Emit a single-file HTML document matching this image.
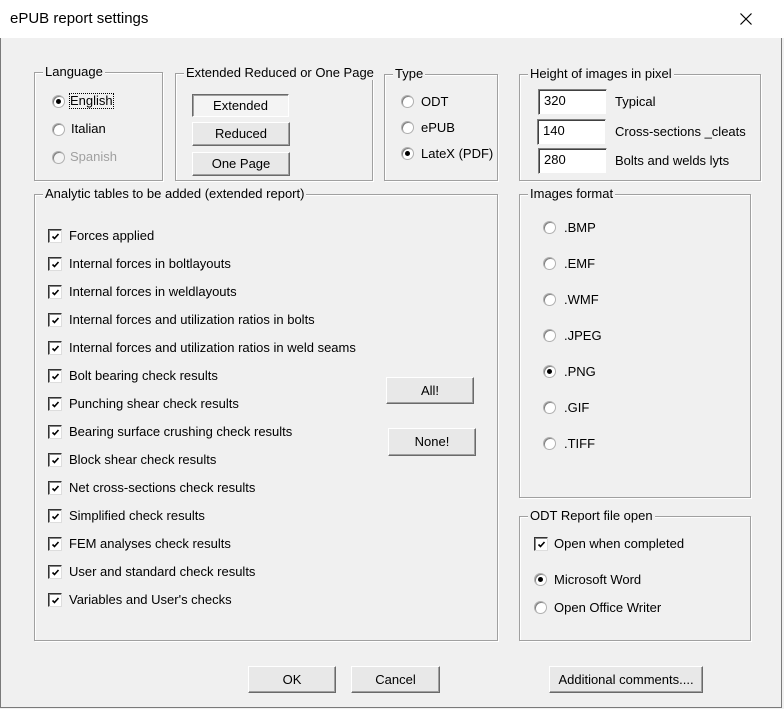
<!DOCTYPE html>
<html><head><meta charset="utf-8"><style>
*{margin:0;padding:0;box-sizing:border-box}
body{width:784px;height:709px;background:#f0f0f0;font-family:"Liberation Sans",sans-serif;font-size:13px;color:#000;position:relative;overflow:hidden}
.win{position:absolute;left:0;top:0;width:782px;height:708px;border:1px solid #7a7a7a;border-top:none}
.title{position:absolute;left:0;top:0;width:784px;height:38px;background:#fff}
.title span{position:absolute;left:10px;top:10px;font-size:15px}
.x{position:absolute;left:740px;top:13px}
.g{position:absolute;border:1px solid #a0a0a0;box-shadow:inset 1px 1px 0 #fff,1px 1px 0 #fff}
.g>.l{position:absolute;top:-8px;left:8px;background:#f0f0f0;padding:0 2px;line-height:14px;white-space:nowrap}
.t{position:absolute;line-height:14px;white-space:nowrap}
.r{position:absolute;width:13px;height:13px;border-radius:50%;background:#fff;border:1px solid #b0b0b0;box-shadow:inset 1px 1px 0 #808080}
.r.on::after{content:"";position:absolute;left:3px;top:3px;width:5px;height:5px;border-radius:50%;background:#000}
.c{position:absolute;width:14px;height:14px;background:#fff;border:1px solid #333;border-right-color:#ddd;border-bottom-color:#ddd;box-shadow:inset 1px 1px 0 #888}
.c svg{position:absolute;left:1px;top:1px}
.b{position:absolute;background:#e8e8e8;border:1px solid;border-color:#fff #6a6a6a #6a6a6a #fff;box-shadow:inset -1px -1px 0 #a0a0a0;text-align:center;line-height:22px}
.e{position:absolute;width:69px;height:26px;background:#fff;border:1px solid;border-color:#808080 #f0f0f0 #f0f0f0 #808080;box-shadow:inset 1px 1px 0 #404040;padding:3px 0 0 5px}
</style></head><body>
<div class="win"></div>
<div class="title"><span>ePUB report settings</span><svg class="x" width="12" height="12"><path d="M0.5 0.5L11.5 11.5M11.5 0.5L0.5 11.5" stroke="#000" stroke-width="1.2"/></svg></div>

<div class="g" style="left:34px;top:72px;width:129px;height:109px"><div class="l">Language</div></div>
<div class="r on" style="left:52px;top:95px"></div><div class="t" style="left:70px;top:94px;outline:1px dotted #000">English</div>
<div class="r" style="left:52px;top:123px"></div><div class="t" style="left:71px;top:122px">Italian</div>
<div class="r" style="left:52px;top:151px;background:#f4f4f4"></div><div class="t" style="left:70px;top:150px;color:#a0a0a0">Spanish</div>

<div class="g" style="left:175px;top:73px;width:198px;height:108px"><div class="l">Extended Reduced or One Page</div></div>
<div class="b" style="left:192px;top:94px;width:97px;height:23px;border-color:#6a6a6a #fff #fff #6a6a6a;box-shadow:inset 1px 1px 0 #a0a0a0;background:#f4f4f4">Extended</div>
<div class="b" style="left:192px;top:122px;width:98px;height:24px">Reduced</div>
<div class="b" style="left:192px;top:152px;width:98px;height:24px">One Page</div>

<div class="g" style="left:384px;top:74px;width:114px;height:107px"><div class="l">Type</div></div>
<div class="r" style="left:401px;top:95px"></div><div class="t" style="left:421px;top:95px">ODT</div>
<div class="r" style="left:401px;top:121px"></div><div class="t" style="left:421px;top:121px">ePUB</div>
<div class="r on" style="left:401px;top:147px"></div><div class="t" style="left:421px;top:147px">LateX (PDF)</div>

<div class="g" style="left:519px;top:74px;width:242px;height:107px"><div class="l">Height of images in pixel</div></div>
<div class="e" style="left:538px;top:89px">320</div><div class="t" style="left:615px;top:95px">Typical</div>
<div class="e" style="left:537px;top:119px">140</div><div class="t" style="left:615px;top:125px">Cross-sections _cleats</div>
<div class="e" style="left:538px;top:148px">280</div><div class="t" style="left:615px;top:154px">Bolts and welds lyts</div>

<div class="g" style="left:34px;top:194px;width:464px;height:447px"><div class="l">Analytic tables to be added (extended report)</div></div>
<div id="cb"></div>
<div class="b" style="left:386px;top:377px;width:88px;height:27px;line-height:25px">All!</div>
<div class="b" style="left:388px;top:428px;width:88px;height:28px;line-height:26px">None!</div>

<div class="g" style="left:519px;top:194px;width:232px;height:304px"><div class="l">Images format</div></div>
<div id="rf"></div>

<div class="g" style="left:519px;top:516px;width:232px;height:125px"><div class="l">ODT Report file open</div></div>
<div class="c" style="left:534px;top:537px"><svg width="11" height="11"><path d="M2.5 5.5 L4.5 7.5 L8.5 3" stroke="#000" stroke-width="1.6" fill="none"/></svg></div><div class="t" style="left:554px;top:537px">Open when completed</div>
<div class="r on" style="left:534px;top:573px"></div><div class="t" style="left:554px;top:573px">Microsoft Word</div>
<div class="r" style="left:534px;top:601px"></div><div class="t" style="left:554px;top:601px">Open Office Writer</div>

<div class="b" style="left:248px;top:666px;width:88px;height:27px;line-height:25px">OK</div>
<div class="b" style="left:351px;top:666px;width:89px;height:27px;line-height:25px">Cancel</div>
<div class="b" style="left:549px;top:666px;width:154px;height:27px;line-height:25px">Additional comments....</div>

<script>
var L=["Forces applied","Internal forces in boltlayouts","Internal forces in weldlayouts","Internal forces and utilization ratios in bolts","Internal forces and utilization ratios in weld seams","Bolt bearing check results","Punching shear check results","Bearing surface crushing check results","Block shear check results","Net cross-sections check results","Simplified check results","FEM analyses check results","User and standard check results","Variables and User's checks"],h="";
L.forEach(function(s,i){var y=229+28*i;h+='<div class="c" style="left:48px;top:'+y+'px"><svg width="11" height="11"><path d="M2.5 5.5 L4.5 7.5 L8.5 3" stroke="#000" stroke-width="1.6" fill="none"/></svg></div><div class="t" style="left:69px;top:'+y+'px">'+s+'</div>';});
document.getElementById("cb").outerHTML=h;
var F=[".BMP",".EMF",".WMF",".JPEG",".PNG",".GIF",".TIFF"];h="";
F.forEach(function(s,i){var y=221+36*i;h+='<div class="r'+(i==4?' on':'')+'" style="left:543px;top:'+y+'px"></div><div class="t" style="left:564px;top:'+y+'px">'+s+'</div>';});
document.getElementById("rf").outerHTML=h;
</script>
</body></html>
